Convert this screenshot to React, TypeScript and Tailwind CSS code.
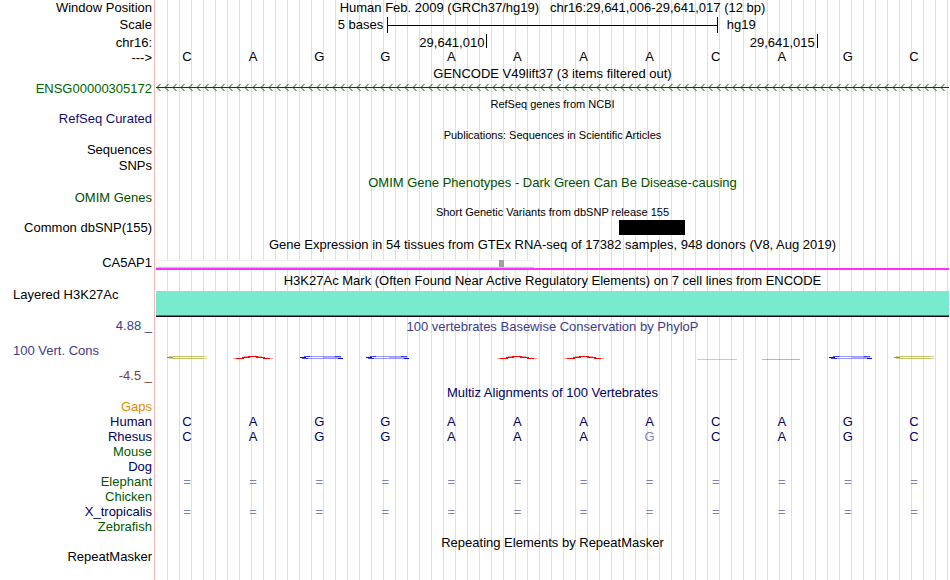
import type { ReactNode } from 'react';

const bases = ['C', 'A', 'G', 'G', 'A', 'A', 'A', 'A', 'C', 'A', 'G', 'C'];
const rhesus = ['C', 'A', 'G', 'G', 'A', 'A', 'A', 'G', 'C', 'A', 'G', 'C'];
const unaligned = bases.map(() => '=');

const species = [
  { name: 'Gaps', color: 'text-[#e68a00]', cells: [] },
  { name: 'Human', color: 'text-[#000064]', cells: bases },
  { name: 'Rhesus', color: 'text-[#000064]', cells: rhesus },
  { name: 'Mouse', color: 'text-[#005a00]', cells: [] },
  { name: 'Dog', color: 'text-[#000064]', cells: [] },
  { name: 'Elephant', color: 'text-[#005a00]', cells: unaligned },
  { name: 'Chicken', color: 'text-[#005a00]', cells: [] },
  { name: 'X_tropicalis', color: 'text-[#000064]', cells: unaligned },
  { name: 'Zebrafish', color: 'text-[#005a00]', cells: [] },
];

// one entry per base, in window order
const phyloP = ['C', 'A', 'G', 'G', '', 'A', 'A', '', 'c', 'a', 'G', 'C'];

type RowProps = {
  label?: string;
  color?: string;
  height?: string;
  children?: ReactNode;
};

function Row({ label, color = 'text-black', height = 'h-[15px] leading-[14px]', children }: RowProps) {
  return (
    <div className={`flex ${height}`}>
      <div className={`w-[156px] shrink-0 pr-1 text-right ${color}`}>{label}</div>
      <div className="min-w-0 flex-1">{children}</div>
    </div>
  );
}

type TitleProps = {
  children: ReactNode;
  color?: string;
  height?: string;
};

function Title({ children, color = 'text-black', height = 'h-4' }: TitleProps) {
  return (
    <Row height={height}>
      <h2 className={`text-center leading-4 ${color}`}>{children}</h2>
    </Row>
  );
}

function SmallTitle({ children }: { children: ReactNode }) {
  return (
    <Row>
      <h2 className="text-center text-[11px] leading-[15px]">{children}</h2>
    </Row>
  );
}

function BaseCells({ cells, color = 'text-black' }: { cells: string[]; color?: string }) {
  return (
    <div className={`grid grid-cols-12 text-center leading-[14px] ${color}`}>
      {cells.map((base, i) => (
        <span key={i} className={`pr-1 ${base !== bases[i] ? 'text-[#8080b2]' : ''}`}>
          {base}
        </span>
      ))}
    </div>
  );
}

function Strand() {
  return (
    <svg className="block h-[11px] w-full" aria-hidden="true">
      <defs>
        <pattern id="strand" width="8" height="11" patternUnits="userSpaceOnUse">
          <path d="M4.5 2 1 5.5 4.5 9" fill="none" stroke="#004b00" />
        </pattern>
      </defs>
      <rect width="100%" height="11" fill="url(#strand)" />
      <rect y="5" width="100%" height="1" fill="#004b00" />
    </svg>
  );
}

function PhyloPMark({ kind }: { kind: string }) {
  return (
    <svg className="block h-1 w-full" viewBox="0 0 66 4" preserveAspectRatio="none" aria-hidden="true">
      {kind === 'C' && (
        <g fill="#989800">
          <path d="M17 0h30v1H17zM17 2h30v1H17z" opacity="0.6" />
          <path d="M13 0h4v1h-4zM13 2h4v1h-4zM47 0h4v1h-4zM47 2h4v1h-4z" opacity="0.4" />
          <path d="M11 1h6v1h-6z" />
        </g>
      )}
      {kind === 'A' && (
        <g fill="#ff0000">
          <path d="M26 0h10v1H26zM20 1h8v1h-8zM34 1h9v1h-9zM14 2h8v1h-8zM41 2h7v1h-7z" />
          <path d="M22 0h4v1h-4zM36 0h4v1h-4zM11 2h3v1h-3zM48 2h3v1h-3z" opacity="0.4" />
        </g>
      )}
      {kind === 'G' && (
        <g fill="#0000ff">
          <path d="M19 0h30v1H19zM17 2h34v1H17z" opacity="0.4" />
          <path d="M16 0h6v1h-6zM47 0h6v1h-6zM14 2h6v1h-6z" opacity="0.7" />
          <path d="M12 1h6v1h-6zM50 2h5v1h-5z" />
          <path d="M35 1h18v1H35z" opacity="0.3" />
        </g>
      )}
      {kind === 'c' && <path d="M12 3h40v1H12z" fill="#989800" opacity="0.45" />}
      {kind === 'a' && <path d="M11 3h38v1H11z" fill="#ff0000" opacity="0.4" />}
    </svg>
  );
}

export default function App() {
  return (
    <main className="relative min-h-screen bg-white pr-px font-['Liberation_Sans',Arial,sans-serif] text-[13px] leading-4 text-black">
      {/* guide lines behind all tracks */}
      <div className="absolute inset-y-0 right-0 left-[154px] border-l border-[#ffb4b4] pl-px">
        <div className="h-full bg-[repeating-linear-gradient(to_right,transparent_0_11px,#dcdcf5_11px_12px)]" />
      </div>

      <div className="relative">
        <Row label="Window Position" height="h-[17px]">
          <h1 className="text-center whitespace-pre">{'Human Feb. 2009 (GRCh37/hg19)   chr16:29,641,006-29,641,017 (12 bp)'}</h1>
        </Row>
        <Row label="Scale" height="h-[17px]">
          <div className="grid h-[15px] grid-cols-24">
            <span className="col-span-7 pr-1 text-right">5 bases</span>
            <span className="col-span-10 flex items-center border-x border-black">
              <span className="h-px w-full bg-black" />
            </span>
            <span className="col-span-7 pl-[9px]">hg19</span>
          </div>
        </Row>
        <Row label="chr16:" height="h-4 leading-[18px]">
          <div className="grid h-[14px] grid-cols-12 grid-rows-1">
            <span className="col-span-5 pr-[2px] text-right">29,641,010</span>
            <span className="col-span-5 border-l border-black pr-[2px] text-right">29,641,015</span>
            <span className="col-span-2 border-l border-black" />
          </div>
        </Row>
        <Row label="--->" height="h-4">
          <BaseCells cells={bases} />
        </Row>

        <Title>GENCODE V49lift37 (3 items filtered out)</Title>
        <Row label="ENSG00000305172" color="text-[#006400]">
          <Strand />
        </Row>
        <SmallTitle>RefSeq genes from NCBI</SmallTitle>
        <Row label="RefSeq Curated" color="text-[#0c0c78]" height="h-4 leading-[14px]" />
        <SmallTitle>Publications: Sequences in Scientific Articles</SmallTitle>
        <Row label="Sequences" height="h-4 leading-[14px]" />
        <Row label="SNPs" height="h-4 leading-[14px]" />
        <Title color="text-[#005000]">OMIM Gene Phenotypes - Dark Green Can Be Disease-causing</Title>
        <Row label="OMIM Genes" color="text-[#005000]" height="h-[14px] leading-[13px]" />
        <SmallTitle>Short Genetic Variants from dbSNP release 155</SmallTitle>
        <Row label="Common dbSNP(155)" height="h-[17px] leading-4">
          <div className="grid grid-cols-12">
            <div className="col-start-8 h-[15px] bg-black" />
          </div>
        </Row>

        <Title>Gene Expression in 54 tissues from GTEx RNA-seq of 17382 samples, 948 donors (V8, Aug 2019)</Title>
        <Row label="CA5AP1" height="h-5 leading-5">
          <div className="flex h-[17px] flex-col justify-end border-b-2 border-[#ff30ff]">
            <div className="w-[47.7%] border-b border-[#c8c8c8]">
              <div className="flex h-[7px] justify-end bg-white pr-[30px] shadow-[inset_0_0_0_1px_#f0f0f0]">
                <div className="w-[5px] bg-[#a0a0a0]" />
              </div>
            </div>
          </div>
        </Row>

        <Title>H3K27Ac Mark (Often Found Near Active Regulatory Elements) on 7 cell lines from ENCODE</Title>
        <div className="flex h-[30px] pt-[2px]">
          <div className="w-[156px] shrink-0 pl-[13px]">
            <div className="-mt-1">Layered H3K27Ac</div>
          </div>
          <div className="h-[26px] flex-1 border-b border-[#200020] bg-[#78ebcf]">
            <div className="h-full border-b border-[#4070b0]" />
          </div>
        </div>

        <div className="flex h-[66px]">
          <div className="flex h-16 w-[156px] shrink-0 flex-col justify-between leading-[14px] text-[#3c3c8c]">
            <span className="pr-1 text-right">4.88 _</span>
            <span className="pl-[13px]">100 Vert. Cons</span>
            <span className="pr-1 text-right text-[#783c3c]">-4.5 _</span>
          </div>
          <div className="flex-1">
            <h2 className="text-center text-[#3c3c8c]">100 vertebrates Basewise Conservation by PhyloP</h2>
            <div className="mt-[21px] grid grid-cols-12">
              {phyloP.map((kind, i) => (
                <PhyloPMark key={i} kind={kind} />
              ))}
            </div>
          </div>
        </div>

        <Title color="text-[#000064]" height="h-[15px]">Multiz Alignments of 100 Vertebrates</Title>
        {species.map((s) => (
          <Row key={s.name} label={s.name} color={s.color}>
            <BaseCells cells={s.cells} color="text-[#000064]" />
          </Row>
        ))}

        <Title height="h-[15px]">Repeating Elements by RepeatMasker</Title>
        <Row label="RepeatMasker" />
      </div>
    </main>
  );
}
